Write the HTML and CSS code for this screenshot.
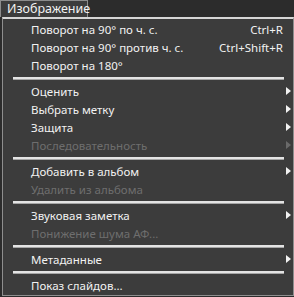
FILE: index.html
```html
<!DOCTYPE html>
<html lang="ru">
<head>
  <meta charset="UTF-8">
  <title>Изображение</title>
  <link rel="stylesheet" href="styles.css">
</head>
<body>
  <div class="menubar">
    <div class="tab">Изображение</div>
  </div>
  <div class="menu">
    <div class="item"><span>Поворот на 90° по ч. с.</span><span class="key">Ctrl+R</span></div>
    <div class="item"><span>Поворот на 90° против ч. с.</span><span class="key">Ctrl+Shift+R</span></div>
    <div class="item"><span>Поворот на 180°</span></div>
    <div class="sep"></div>
    <div class="item sub"><span>Оценить</span></div>
    <div class="item sub"><span>Выбрать метку</span></div>
    <div class="item sub"><span>Защита</span></div>
    <div class="item sub off"><span>Последовательность</span></div>
    <div class="sep"></div>
    <div class="item sub"><span>Добавить в альбом</span></div>
    <div class="item off"><span>Удалить из альбома</span></div>
    <div class="sep"></div>
    <div class="item sub"><span>Звуковая заметка</span></div>
    <div class="item off"><span>Понижение шума АФ...</span></div>
    <div class="sep"></div>
    <div class="item sub"><span>Метаданные</span></div>
    <div class="sep"></div>
    <div class="item"><span>Показ слайдов...</span></div>
  </div>
</body>
</html>
```

FILE: styles.css
```css
* {
  box-sizing: border-box;
}

body {
  margin: 0;
  background: #2c2c2c;
  color: #f2f2f2;
  font-family: 'Noto Sans', sans-serif;
  font-size: 11.5px;
  width: 294px;
  height: 297px;
  overflow: hidden;
}

.menubar {
  display: flex;
  height: 17px;
}

.tab {
  height: 17px;
  padding: 0 6px 0 6px;
  line-height: 16px;
  font-size: 12.5px;
  background: #3c3c3c;
  border: 1px solid #8c8c8c;
  border-bottom: none;
  width: 88px;
}

.menu {
  margin-left: 2px;
  width: 292px;
  height: 279px;
  background: #3c3c3c;
  border: 1px solid #8e8e8e;
  border-top: 2px solid #d6d6d6;
  padding: 1px 0 0 0;
}

.item {
  position: relative;
  display: flex;
  justify-content: space-between;
  align-items: center;
  height: 18px;
  padding: 0 10px 0 28px;
}

.key {
  text-align: right;
}

.off {
  color: #6e6e6e;
}

.sub::after {
  content: '';
  position: absolute;
  right: 2px;
  top: 5px;
  border-left: 5px solid #f2f2f2;
  border-top: 4px solid transparent;
  border-bottom: 4px solid transparent;
}

.off.sub::after {
  border-left-color: #6a6a6a;
}

.sep {
  height: 8px;
  display: flex;
  align-items: center;
  padding: 0 9px 0 10px;
}

.sep::before {
  content: '';
  flex: 1;
  height: 2px;
  background: #e4e4e4;
  border-bottom: 1px solid #a6a6a6;
  margin-top: 1px;
}
```
